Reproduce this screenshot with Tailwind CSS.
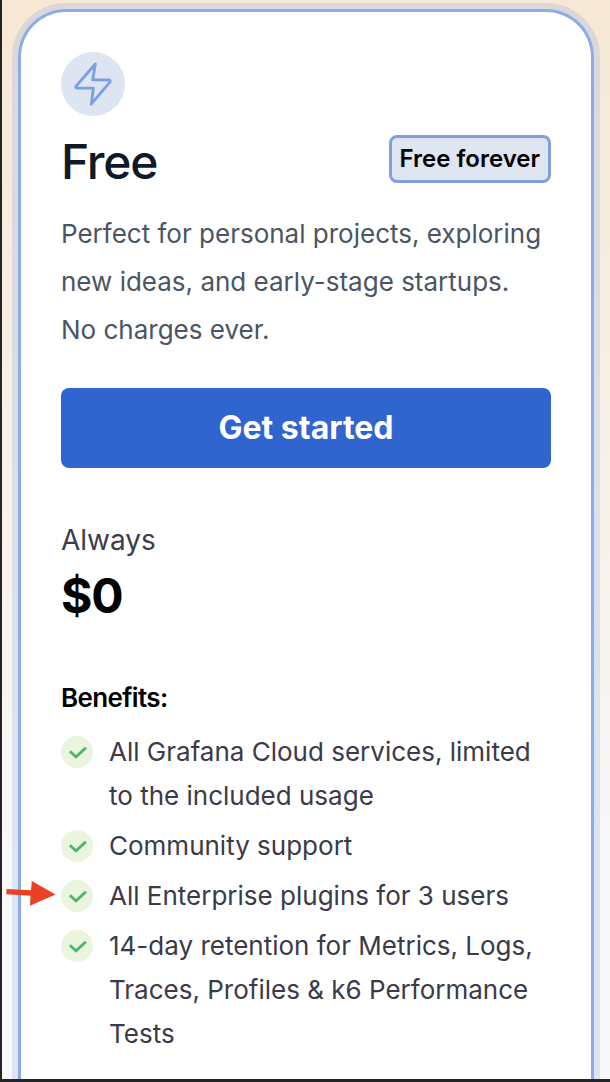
<!DOCTYPE html>
<html lang="en">
<head>
<meta charset="utf-8">
<meta name="viewport" content="width=device-width, initial-scale=1">
<title>Free plan</title>
<script src="https://cdn.jsdelivr.net/npm/@tailwindcss/browser@4"></script>
</head>
<body class="font-['Inter',sans-serif]">
<main class="relative flex min-h-screen flex-col overflow-hidden border-b-3 border-l-2 border-[#242426] bg-linear-to-b from-[#f6e8d4] to-[#f8f8f8] to-80% pt-[9px] pr-4 pl-4">
  <section class="flex flex-1 flex-col rounded-t-[48px] border-3 border-b-0 border-[#8aace8] bg-white px-10 pt-10 pb-4 shadow-[0_0_0_6px_rgba(113,148,233,0.2)]">
    <div class="flex size-16 items-center justify-center rounded-full bg-[#dde5f3]">
      <svg class="size-16" viewBox="0 0 64 64" fill="none" stroke="#7c9fe0" stroke-width="2.8" stroke-linejoin="round" stroke-linecap="round" aria-hidden="true"><path d="M34.3 12 14.9 34.4Q14.5 36 16 36.1L32.4 36.2 30.2 52.2 49.1 29.9Q49.7 28.1 48.2 28L31.7 27.9Z"/></svg>
    </div>
    <div class="mt-[19px] flex items-start justify-between">
      <h2 class="pt-[3px] text-[48px] leading-12 font-medium tracking-tight text-[#111827]">Free</h2>
      <span class="flex h-12 items-center rounded-lg border-3 border-[#839fdd] bg-[#dfe5f1] px-2 text-[24px] font-semibold text-black">Free forever</span>
    </div>
    <p class="mt-6 text-[26px] leading-12 text-[#4b5563]">Perfect for personal projects, exploring<br>new ideas, and early-stage startups.<br>No charges ever.</p>
    <a href="#" class="mt-[34px] flex h-20 items-center justify-center rounded-lg bg-[#3065d0] text-[32px] font-bold text-white">Get started</a>
    <p class="mt-[50px] text-[28px] leading-11 text-[#3d3d4b]">Always</p>
    <p class="mt-2.5 text-[48px] leading-12 font-bold tracking-tight text-black">$0</p>
    <h3 class="mt-14 text-[26px] leading-11 font-semibold tracking-tight text-black">Benefits:</h3>
    <ul class="mt-2.5 flex flex-col gap-1.5 text-[26px] leading-11 text-[#3b3a48]">
      <li class="flex gap-4"><svg class="mt-1.5 size-8 shrink-0" viewBox="0 0 32 32" fill="none" aria-hidden="true"><circle cx="16" cy="16" r="16" fill="#eaf5dd"/><path d="M8.9 15.2 15 20.9 24.9 11.7" stroke="#51b074" stroke-width="2.8"/></svg><span>All Grafana Cloud services, limited<br>to the included usage</span></li>
      <li class="flex gap-4"><svg class="mt-1.5 size-8 shrink-0" viewBox="0 0 32 32" fill="none" aria-hidden="true"><circle cx="16" cy="16" r="16" fill="#eaf5dd"/><path d="M8.9 15.2 15 20.9 24.9 11.7" stroke="#51b074" stroke-width="2.8"/></svg><span>Community support</span></li>
      <li class="relative flex gap-4"><svg class="absolute top-1.5 -left-14 h-8 w-13" viewBox="0 0 52 32" fill="#ea4026" aria-hidden="true"><path d="M1.5 9 26 10.3 26.8 1 50.5 14.5 25 25.8 25.5 15.8 1.3 14.3Z"/></svg><svg class="mt-1.5 size-8 shrink-0" viewBox="0 0 32 32" fill="none" aria-hidden="true"><circle cx="16" cy="16" r="16" fill="#eaf5dd"/><path d="M8.9 15.2 15 20.9 24.9 11.7" stroke="#51b074" stroke-width="2.8"/></svg><span>All Enterprise plugins for 3 users</span></li>
      <li class="flex gap-4"><svg class="mt-1.5 size-8 shrink-0" viewBox="0 0 32 32" fill="none" aria-hidden="true"><circle cx="16" cy="16" r="16" fill="#eaf5dd"/><path d="M8.9 15.2 15 20.9 24.9 11.7" stroke="#51b074" stroke-width="2.8"/></svg><span>14-day retention for Metrics, Logs,<br>Traces, Profiles &amp; k6 Performance<br>Tests</span></li>
    </ul>
  </section>
</main>
</body>
</html>
